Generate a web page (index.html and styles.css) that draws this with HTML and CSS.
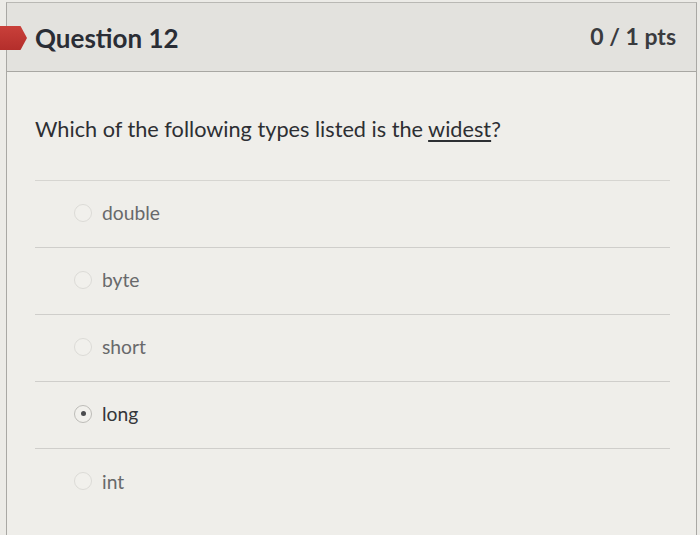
FILE: index.html
```html
<!DOCTYPE html>
<html>
<head>
<meta charset="utf-8">
<link rel="stylesheet" href="styles.css">
</head>
<body>
<div class="page">
  <div class="flag"></div>
  <div class="card">
    <div class="header">
      <span class="title">Question 12</span>
      <span class="pts">0 / 1 pts</span>
    </div>
    <div class="body">
      <p class="question">Which of the following types listed is the <u>widest</u>?</p>
      <div class="answers">
        <div class="answer"><span class="radio"></span><span class="label">double</span></div>
        <div class="answer"><span class="radio"></span><span class="label">byte</span></div>
        <div class="answer"><span class="radio"></span><span class="label">short</span></div>
        <div class="answer selected"><span class="radio"></span><span class="label">long</span></div>
        <div class="answer"><span class="radio"></span><span class="label">int</span></div>
      </div>
    </div>
  </div>
</div>
</body>
</html>
```
FILE: styles.css
```css
html, body {
  margin: 0;
  padding: 0;
  background: #ecebe7;
  font-family: Lato, "Open Sans", sans-serif;
}
.page {
  position: relative;
  width: 700px;
  height: 535px;
  overflow: hidden;
  padding: 2px 3px 0 6px;
  box-sizing: border-box;
}
.flag {
  position: absolute;
  left: 0;
  top: 26px;
  width: 27px;
  height: 24px;
  background: linear-gradient(180deg, #c9403a, #b42e2b);
  clip-path: polygon(0 0, 76% 0, 100% 50%, 76% 100%, 0 100%);
}
.card {
  display: flex;
  flex-direction: column;
  border-top: 1px solid #b9b8b4;
  border-left: 1px solid #a9a8a4;
  border-right: 1px solid #a9a8a4;
  height: 100%;
  box-sizing: border-box;
}
.header {
  display: flex;
  justify-content: space-between;
  align-items: center;
  height: 68px;
  flex: none;
  padding: 0 20px 0 28px;
  background: #e3e2de;
  border-bottom: 1px solid #a8a7a3;
}
.title {
  font-weight: 700;
  font-size: 26px;
  color: #2a2d35;
  margin-top: 2px;
}
.pts {
  font-weight: 700;
  font-size: 23px;
  color: #3a3b3e;
  margin-top: -3px;
}
.body {
  flex: 1;
  background: #efeeea;
  padding: 0 26px 0 28px;
}
.question {
  margin: 0;
  padding: 44px 0 0 0;
  height: 64px;
  font-size: 21.7px;
  color: #2d2f33;
}
.question u {
  text-underline-offset: 3px;
  text-decoration-thickness: 1.5px;
}
.answers {
  border-top: 1px solid #d6d5d1;
}
.answer {
  display: flex;
  align-items: center;
  height: 67px;
  box-sizing: border-box;
  padding: 0 0 3px 39px;
  border-bottom: 1px solid #cfcecb;
  font-size: 19.3px;
  color: #68696b;
}
.answer:last-child {
  border-bottom: none;
}
.radio {
  width: 18px;
  height: 18px;
  border-radius: 50%;
  border: 1px solid #dcdbd7;
  background: #f1f0ec;
  margin-right: 10px;
  box-sizing: border-box;
  display: flex;
  align-items: center;
  justify-content: center;
}
.selected {
  color: #34363a;
}
.selected .radio {
  border-color: #bdbcb8;
}
.selected .radio::after {
  content: "";
  width: 5px;
  height: 5px;
  border-radius: 50%;
  background: #4a4b4e;
}
```
